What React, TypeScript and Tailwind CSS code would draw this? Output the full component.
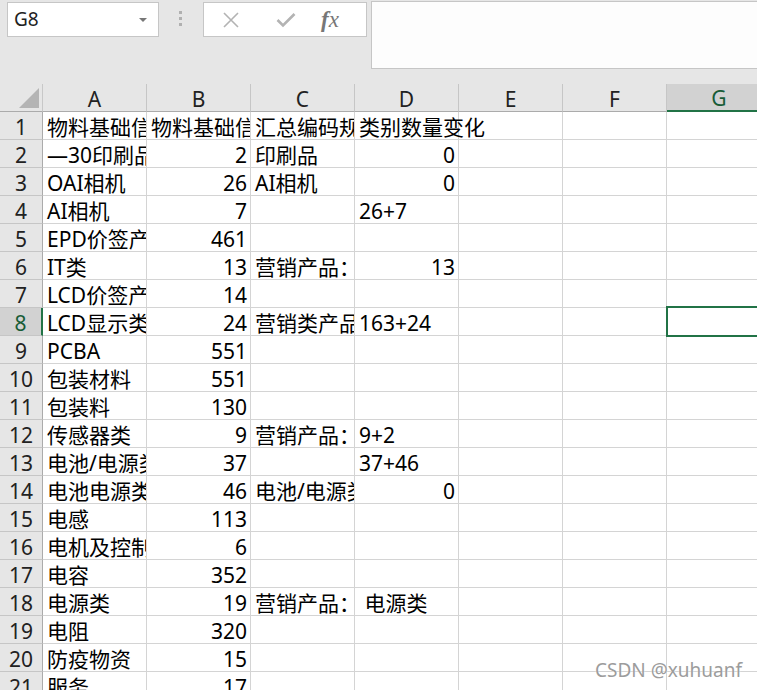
type Cell = { t?: string; r?: boolean; ov?: boolean }

const rows: Cell[][] = [
  [{ t: "物料基础信息" }, { t: "物料基础信息" }, { t: "汇总编码规则" }, { t: "类别数量变化", ov: true }],
  [{ t: "—30印刷品" }, { t: "2", r: true }, { t: "印刷品" }, { t: "0", r: true }],
  [{ t: "OAI相机" }, { t: "26", r: true }, { t: "AI相机" }, { t: "0", r: true }],
  [{ t: "AI相机" }, { t: "7", r: true }, {}, { t: "26+7" }],
  [{ t: "EPD价签产品" }, { t: "461", r: true }, {}, {}],
  [{ t: "IT类" }, { t: "13", r: true }, { t: "营销产品：" }, { t: "13", r: true }],
  [{ t: "LCD价签产品" }, { t: "14", r: true }, {}, {}],
  [{ t: "LCD显示类" }, { t: "24", r: true }, { t: "营销类产品" }, { t: "163+24" }],
  [{ t: "PCBA" }, { t: "551", r: true }, {}, {}],
  [{ t: "包装材料" }, { t: "551", r: true }, {}, {}],
  [{ t: "包装料" }, { t: "130", r: true }, {}, {}],
  [{ t: "传感器类" }, { t: "9", r: true }, { t: "营销产品：" }, { t: "9+2" }],
  [{ t: "电池/电源类" }, { t: "37", r: true }, {}, { t: "37+46" }],
  [{ t: "电池电源类" }, { t: "46", r: true }, { t: "电池/电源类" }, { t: "0", r: true }],
  [{ t: "电感" }, { t: "113", r: true }, {}, {}],
  [{ t: "电机及控制" }, { t: "6", r: true }, {}, {}],
  [{ t: "电容" }, { t: "352", r: true }, {}, {}],
  [{ t: "电源类" }, { t: "19", r: true }, { t: "营销产品：" }, { t: "\u00a0电源类" }],
  [{ t: "电阻" }, { t: "320", r: true }, {}, {}],
  [{ t: "防疫物资" }, { t: "15", r: true }, {}, {}],
  [{ t: "服务" }, { t: "17", r: true }, {}, {}],
]

const cols = ["A", "B", "C", "D", "E", "F", "G"]

function FormulaBar() {
  return (
    <div className="h-[84px] bg-[#e6e6e6] flex items-start">
      <div className="ml-[7px] mt-[2px] w-[152px] h-[35px] bg-white border border-[#c6c6c6] flex items-center justify-between pl-[6px] pr-[11px]">
        <span className="text-[19px] text-[#222] font-['Noto_Sans',sans-serif]">G8</span>
        <span className="w-0 h-0 border-l-[4px] border-r-[4px] border-t-[4px] border-l-transparent border-r-transparent border-t-[#777]" />
      </div>
      <div className="ml-[20px] mt-[11px] flex flex-col gap-[3px]">
        <span className="w-[3px] h-[3px] bg-[#b0b0b0]" />
        <span className="w-[3px] h-[3px] bg-[#b0b0b0]" />
        <span className="w-[3px] h-[3px] bg-[#b0b0b0]" />
      </div>
      <div className="ml-[21px] mt-[2px] w-[164px] h-[35px] bg-white border border-[#c6c6c6] flex items-center">
        <svg className="ml-[18px]" width="18" height="18" viewBox="0 0 18 18">
          <path d="M2 2 L16 16 M16 2 L2 16" stroke="#b3b3b3" strokeWidth="1.6" fill="none" />
        </svg>
        <svg className="ml-[36px]" width="20" height="16" viewBox="0 0 20 16">
          <path d="M1.5 8 L7 13.5 L18.5 2" stroke="#b3b3b3" strokeWidth="2.6" fill="none" />
        </svg>
        <span className="ml-[25px] text-[23px] italic text-[#777] font-['Liberation_Serif',serif] leading-none">
          <span className="font-bold">f</span>x
        </span>
      </div>
      <div className="ml-[4px] mt-[1px] flex-1 h-[68px] bg-[#fdfdfd] border border-[#c6c6c6] border-r-0" />
    </div>
  )
}

function HeaderRow() {
  return (
    <div className="grid grid-cols-[43px_repeat(7,104px)] h-[28px]">
      <div className="bg-[#e6e6e6] border-r border-b border-r-[#c8c8c8] border-b-[#ababab] flex items-end justify-end pr-[3px] pb-[3px]">
        <svg width="20" height="20" viewBox="0 0 20 20">
          <path d="M20 0 L20 20 L0 20 Z" fill="#b4b4b4" />
        </svg>
      </div>
      {cols.map((c) =>
        c === "G" ? (
          <div
            key={c}
            className="bg-[#d2d2d2] border-b-2 border-b-[#217346] flex items-center justify-center pt-[3px] text-[21px] text-[#185c37]"
          >
            {c}
          </div>
        ) : (
          <div
            key={c}
            className="bg-[#e6e6e6] border-r border-b border-r-[#c6c6c6] border-b-[#ababab] flex items-center justify-center pt-[3px] text-[21px] text-[#222]"
          >
            {c}
          </div>
        ),
      )}
    </div>
  )
}

function DataRow({ cells, n }: { cells: Cell[]; n: number }) {
  const sel = n === 8
  return (
    <div className="grid grid-cols-[43px_repeat(7,104px)] h-[28px]">
      {sel ? (
        <div className="bg-[#d2d2d2] border-r-2 border-b border-r-[#217346] border-b-[#c6c6c6] flex items-center justify-center pt-[3px] text-[21px] text-[#185c37]">
          {n}
        </div>
      ) : (
        <div className="bg-[#e6e6e6] border-r border-b border-r-[#ababab] border-b-[#c6c6c6] flex items-center justify-center pt-[3px] text-[21px] text-[#222]">
          {n}
        </div>
      )}
      {cells.map((c, i) => (
        <div
          key={i}
          className={`border-r border-b border-[#d4d4d4] flex items-center px-[3px] pt-[3px] whitespace-nowrap text-[21px] text-black ${
            c.ov ? "overflow-visible relative z-10" : "overflow-hidden"
          } ${c.r ? "justify-end" : "justify-start"}`}
        >
          {c.t && <span className={c.r ? "" : "pl-[1px]"}>{c.t}</span>}
        </div>
      ))}
      <div className="border-r border-b border-[#d4d4d4]" />
      <div className="border-r border-b border-[#d4d4d4]" />
      <div className="relative border-r border-b border-[#d4d4d4]">
        {sel && <div className="absolute -left-[1px] -top-[2px] w-[110px] h-[31px] border-2 border-[#217346]" />}
      </div>
    </div>
  )
}

export default function App() {
  return (
    <div className="relative w-[757px] h-[690px] overflow-hidden bg-white font-['Noto_Sans','Noto_Sans_CJK_SC',sans-serif] leading-none">
      <FormulaBar />
      <HeaderRow />
      {rows.map((r, i) => (
        <DataRow key={i} cells={r} n={i + 1} />
      ))}
      <div className="absolute right-[15px] bottom-[10px] text-[19px] leading-none text-[#9c9c9c] font-['Noto_Sans',sans-serif] [text-shadow:0_0_2px_#fff]">
        CSDN @xuhuanf
      </div>
    </div>
  )
}
